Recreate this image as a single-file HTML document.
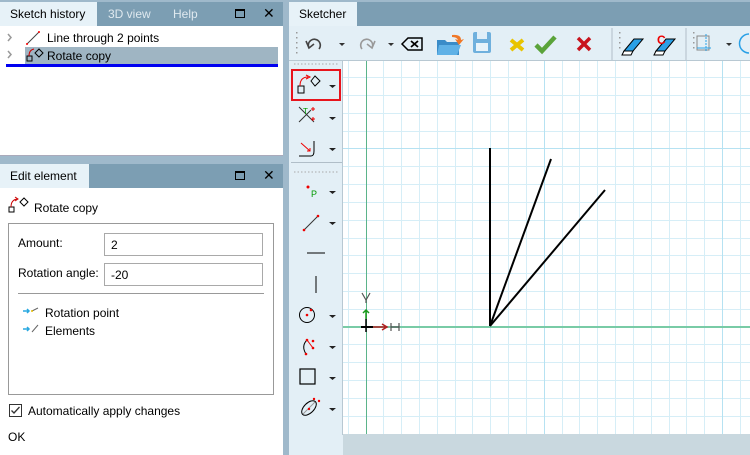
<!DOCTYPE html>
<html><head><meta charset="utf-8"><style>
*{margin:0;padding:0;box-sizing:border-box}
body{width:750px;height:455px;overflow:hidden;background:#9fb9cb;font-family:"Liberation Sans",sans-serif;font-size:12px;color:#000;position:relative}
.abs{position:absolute;white-space:nowrap}
.tabbar{background:#7c9eb3}
.tab{position:absolute;top:0;height:24px;line-height:24px;padding:0 10px;color:#dfe9ef;white-space:nowrap}
.tab.on{background:#e7f2f8;color:#000}
.ctl{position:absolute;top:4px;font-size:14px;color:#000}
.white{background:#fff}
.field{position:absolute;left:104px;width:159px;height:23px;border:1px solid #a9a9a9;background:#fff;padding:4px 6px;font-size:12px}
</style></head><body>

<!-- left top panel -->
<div class="abs tabbar" style="left:0;top:2px;width:283px;height:24px">
 <div class="tab on" style="left:0;width:97px">Sketch history</div>
 <div class="tab" style="left:98px">3D view</div>
 <div class="tab" style="left:163px">Help</div>
 <div class="abs" style="left:235px;top:7px;width:10px;height:9px;border:1.5px solid #000;border-top-width:2.5px"></div>
 <div class="ctl" style="left:263px;top:3px">✕</div>
</div>
<div class="abs white" style="left:0;top:26px;width:283px;height:130px;border-bottom:1px solid #aab"></div>
<svg class="abs" style="left:6px;top:33px" width="8" height="30"><path d="M2 1L5 4.5L2 8M2 18L5 21.5L2 25" stroke="#999" stroke-width="1.5" fill="none"/></svg>
<svg class="abs" style="left:24px;top:30px" width="18" height="16"><line x1="3" y1="14" x2="15" y2="2" stroke="#444"/><circle cx="3" cy="14" r="1" fill="red"/><circle cx="15" cy="2" r="1" fill="red"/></svg>
<div class="abs" style="left:47px;top:31px">Line through 2 points</div>
<div class="abs" style="left:25px;top:47px;width:253px;height:17px;background:#9fb5c3"></div>
<svg class="abs" style="left:25px;top:47px" width="20" height="17"><rect x="2" y="9" width="5" height="5" fill="none" stroke="#000"/><path d="M4 9 Q4 3 9 2" fill="none" stroke="#c00"/><path d="M10 6 L14 2 L18 6 L14 10Z" fill="none" stroke="#000"/></svg>
<div class="abs" style="left:47px;top:49px">Rotate copy</div>
<div class="abs" style="left:6px;top:64px;width:272px;height:3px;background:#0000f0"></div>

<!-- edit element panel -->
<div class="abs tabbar" style="left:0;top:164px;width:283px;height:24px">
 <div class="tab on" style="left:0;width:89px">Edit element</div>
 <div class="abs" style="left:235px;top:7px;width:10px;height:9px;border:1.5px solid #000;border-top-width:2.5px"></div>
 <div class="ctl" style="left:263px;top:3px">✕</div>
</div>
<div class="abs white" style="left:0;top:188px;width:283px;height:267px"></div>
<svg class="abs" style="left:8px;top:196px" width="22" height="20"><rect x="1" y="11" width="5" height="5" fill="none" stroke="#000"/><path d="M3 11 Q3 4 9 3" fill="none" stroke="#c00"/><path d="M7 1 L10 3 L7 5" fill="none" stroke="#c00"/><path d="M12 6 L16 2 L20 6 L16 10Z" fill="none" stroke="#000"/></svg>
<div class="abs" style="left:34px;top:201px">Rotate copy</div>
<div class="abs" style="left:8px;top:223px;width:266px;height:172px;border:1px solid #999"></div>
<div class="abs" style="left:18px;top:236px">Amount:</div>
<div class="field" style="top:233px">2</div>
<div class="abs" style="left:18px;top:266px">Rotation angle:</div>
<div class="field" style="top:263px">-20</div>
<div class="abs" style="left:18px;top:293px;width:246px;height:1px;background:#999"></div>
<svg class="abs" style="left:22px;top:306px" width="18" height="28"><path d="M1 5H7M5 3L7 5L5 7" stroke="#29a8e0" stroke-width="1.5" fill="none"/><line x1="10" y1="5" x2="16" y2="2" stroke="#666"/><circle cx="10" cy="5" r="1" fill="#e8c000"/><path d="M1 23H7M5 21L7 23L5 25" stroke="#29a8e0" stroke-width="1.5" fill="none"/><line x1="10" y1="26" x2="16" y2="19" stroke="#666"/></svg>
<div class="abs" style="left:45px;top:306px">Rotation point</div>
<div class="abs" style="left:45px;top:324px">Elements</div>
<div class="abs" style="left:9px;top:404px;width:13px;height:13px;border:1px solid #333;background:#fff"></div>
<svg class="abs" style="left:9px;top:404px" width="13" height="13"><path d="M2.5 6.5L5 9L10.5 3" stroke="#333" stroke-width="1.3" fill="none"/></svg>
<div class="abs" style="left:28px;top:404px">Automatically apply changes</div>
<div class="abs" style="left:8px;top:430px">OK</div>

<!-- right side -->
<div class="abs tabbar" style="left:289px;top:2px;width:461px;height:24px">
 <div class="tab on" style="left:0;width:68px">Sketcher</div>
</div>
<div class="abs" style="left:289px;top:26px;width:461px;height:429px;background:#e3eff6"></div>
<div class="abs" style="left:289px;top:60px;width:461px;height:1px;background:#b8c8d2"></div>
<!-- toolbar -->
<svg class="abs" style="left:289px;top:26px" width="461" height="34">
 <g fill="#999"><rect x="7" y="6" width="1.5" height="1.5"/><rect x="7" y="11" width="1.5" height="1.5"/><rect x="7" y="16" width="1.5" height="1.5"/><rect x="7" y="21" width="1.5" height="1.5"/><rect x="7" y="26" width="1.5" height="1.5"/>
 <rect x="330" y="6" width="1.5" height="1.5"/><rect x="330" y="11" width="1.5" height="1.5"/><rect x="330" y="16" width="1.5" height="1.5"/><rect x="330" y="21" width="1.5" height="1.5"/>
 <rect x="404" y="6" width="1.5" height="1.5"/><rect x="404" y="11" width="1.5" height="1.5"/><rect x="404" y="16" width="1.5" height="1.5"/><rect x="404" y="21" width="1.5" height="1.5"/></g>
 <line x1="323" y1="2" x2="323" y2="34" stroke="#b0bec8"/><line x1="397" y1="2" x2="397" y2="34" stroke="#b0bec8"/>
 <path d="M20 22 A6 6 0 1 1 30 23" fill="none" stroke="#444" stroke-width="1.6"/><path d="M17 15L20 22L25 18" fill="none" stroke="#444" stroke-width="1.6"/>
 <path d="M50 17l6 0l-3 3z" fill="#333"/>
 <path d="M83 22 A6 6 0 1 0 73 23" fill="none" stroke="#999" stroke-width="1.6"/><path d="M86 15L83 22L78 18" fill="none" stroke="#999" stroke-width="1.6"/>
 <path d="M99 17l6 0l-3 3z" fill="#333"/>
 <path d="M113 18L119 12H133V24H119Z" fill="none" stroke="#000" stroke-width="1.5"/><path d="M122 15L129 21M129 15L122 21" stroke="#000" stroke-width="1.8"/>
 <path d="M148 14H156L158 16H170V29H148Z" fill="#3a8cc8"/><path d="M150 19H172L168 29H148Z" fill="#5fb1e6"/><path d="M163 9Q172 8 172 14L175 13L170 19L166 13L169 14Q168 11 163 11Z" fill="#f07828"/>
 <rect x="184" y="6" width="18" height="21" rx="2" fill="#6fb0dd"/><rect x="188" y="6" width="10" height="7" fill="#dfeef8"/><rect x="187" y="17" width="12" height="8" fill="#e8f3fa"/>
 <path d="M222 14L234 24M234 14L222 24" stroke="#e8c400" stroke-width="4"/>
 <path d="M247 19L253 25L266 11" stroke="#5aa33a" stroke-width="4.5" fill="none"/>
 <path d="M289 12L301 24M301 12L289 24" stroke="#c8141e" stroke-width="3.5"/>
 <path d="M335 25L345 13H354L344 25Z" fill="#2aa0e6" stroke="#000"/><path d="M333 29L335 25H344L342 29Z" fill="#fff" stroke="#000"/>
 <path d="M367 25L377 13H386L376 25Z" fill="#2aa0e6" stroke="#000"/><path d="M365 29L367 25H376L374 29Z" fill="#fff" stroke="#000"/><text x="368" y="18" font-family="Liberation Sans" font-weight="bold" font-size="12" fill="#e00">C</text>
 <rect x="408" y="10" width="12" height="14" fill="none" stroke="#888"/><line x1="417" y1="8" x2="417" y2="26" stroke="#2aa0e6" stroke-dasharray="2 1"/><line x1="408" y1="22" x2="422" y2="22" stroke="#2aa0e6"/>
 <path d="M437 17l6 0l-3 3z" fill="#333"/>
 <path d="M460 8A8 8 0 0 0 460 27" fill="none" stroke="#2aa0e6" stroke-width="1.5"/>
</svg>
<!-- left vertical toolbar -->
<div class="abs" style="left:342px;top:61px;width:1px;height:374px;background:#b8c8d2"></div>
<div class="abs" style="left:291px;top:69px;width:50px;height:32px;border:2px solid #e8141c"></div>
<div class="abs" style="left:291px;top:162px;width:51px;height:1px;background:#b0bec8"></div>
<svg class="abs" style="left:289px;top:61px" width="53" height="374">
 <g stroke="#aaa" stroke-dasharray="1.5 2"><line x1="5" y1="3" x2="50" y2="3"/><line x1="5" y1="111" x2="50" y2="111"/></g>
 <g fill="#222"><path d="M40 24h7l-3.5 3z"/><path d="M40 56h7l-3.5 3z"/><path d="M40 87h7l-3.5 3z"/><path d="M40 130h7l-3.5 3z"/><path d="M40 161h7l-3.5 3z"/><path d="M40 254h7l-3.5 3z"/><path d="M40 285h7l-3.5 3z"/><path d="M40 316h7l-3.5 3z"/><path d="M40 347h7l-3.5 3z"/></g>
 <rect x="9" y="25" width="6" height="7" fill="none" stroke="#000"/><path d="M11 25Q11 16 19 16" fill="none" stroke="#e00"/><path d="M17 14L21 16L17 18" fill="none" stroke="#e00"/><path d="M22 20L26 15L31 20L26 25Z" fill="none" stroke="#000"/>
 <path d="M10 46L25 61M10 61L22 49" stroke="#333"/><text x="14" y="53" font-size="8" fill="#090" font-family="Liberation Sans">T</text><path d="M22 48h4M24 46v4M22 58h4M24 56v4" stroke="#e00"/>
 <path d="M10 95H22Q25 95 25 90V80" fill="none" stroke="#000"/><path d="M12 82L21 90" stroke="#e00"/><path d="M18 90h3v-3" stroke="#e00" fill="none"/>
 <circle cx="19" cy="126" r="1.5" fill="#e00"/><text x="22" y="136" font-size="9" fill="#090" font-family="Liberation Sans">P</text>
 <line x1="15" y1="169" x2="29" y2="155" stroke="#333"/><circle cx="15" cy="169" r="1.3" fill="#e00"/><circle cx="29" cy="155" r="1.3" fill="#e00"/>
 <line x1="18" y1="192" x2="36" y2="192" stroke="#000"/>
 <line x1="27" y1="215" x2="27" y2="232" stroke="#000"/>
 <circle cx="18" cy="254" r="7.5" fill="none" stroke="#000"/><circle cx="18" cy="254" r="1.3" fill="#e00"/><circle cx="22" cy="249" r="1.3" fill="#e00"/>
 <path d="M17 293Q12 285 18 279" fill="none" stroke="#000"/><path d="M18 279L24 287" stroke="#e00"/><circle cx="18" cy="279" r="1.3" fill="#e00"/><circle cx="24" cy="287" r="1.3" fill="#e00"/><circle cx="17" cy="293" r="1.3" fill="#e00"/><circle cx="24" cy="280" r="1.3" fill="#e00"/>
 <rect x="11" y="308" width="15" height="15" fill="none" stroke="#000" stroke-width="1.2"/>
 <ellipse cx="20" cy="347" rx="9" ry="5" transform="rotate(-45 20 347)" fill="none" stroke="#000"/><line x1="14" y1="353" x2="26" y2="341" stroke="#999"/><circle cx="25" cy="338" r="1.2" fill="#e00"/><circle cx="20" cy="348" r="1.2" fill="#e00"/><circle cx="30" cy="340" r="1.2" fill="#e00"/>
</svg>
<!-- canvas -->
<svg class="abs" style="left:343px;top:61px" width="407" height="373">
 <rect width="407" height="373" fill="#fff"/>
 <g stroke="#d6eef7" stroke-width="1">
  <line x1="5.5" y1="0" x2="5.5" y2="373"/><line x1="40.5" y1="0" x2="40.5" y2="373"/><line x1="58.5" y1="0" x2="58.5" y2="373"/><line x1="76.5" y1="0" x2="76.5" y2="373"/><line x1="94.5" y1="0" x2="94.5" y2="373"/><line x1="112.5" y1="0" x2="112.5" y2="373"/><line x1="129.5" y1="0" x2="129.5" y2="373"/><line x1="147.5" y1="0" x2="147.5" y2="373"/><line x1="165.5" y1="0" x2="165.5" y2="373"/><line x1="183.5" y1="0" x2="183.5" y2="373"/><line x1="219.5" y1="0" x2="219.5" y2="373"/><line x1="236.5" y1="0" x2="236.5" y2="373"/><line x1="254.5" y1="0" x2="254.5" y2="373"/><line x1="272.5" y1="0" x2="272.5" y2="373"/><line x1="290.5" y1="0" x2="290.5" y2="373"/><line x1="308.5" y1="0" x2="308.5" y2="373"/><line x1="326.5" y1="0" x2="326.5" y2="373"/><line x1="343.5" y1="0" x2="343.5" y2="373"/><line x1="361.5" y1="0" x2="361.5" y2="373"/><line x1="397.5" y1="0" x2="397.5" y2="373"/>
  <line x1="0" y1="16.5" x2="407" y2="16.5"/><line x1="0" y1="34.5" x2="407" y2="34.5"/><line x1="0" y1="52.5" x2="407" y2="52.5"/><line x1="0" y1="70.5" x2="407" y2="70.5"/><line x1="0" y1="105.5" x2="407" y2="105.5"/><line x1="0" y1="123.5" x2="407" y2="123.5"/><line x1="0" y1="141.5" x2="407" y2="141.5"/><line x1="0" y1="159.5" x2="407" y2="159.5"/><line x1="0" y1="177.5" x2="407" y2="177.5"/><line x1="0" y1="194.5" x2="407" y2="194.5"/><line x1="0" y1="212.5" x2="407" y2="212.5"/><line x1="0" y1="230.5" x2="407" y2="230.5"/><line x1="0" y1="248.5" x2="407" y2="248.5"/><line x1="0" y1="283.5" x2="407" y2="283.5"/><line x1="0" y1="301.5" x2="407" y2="301.5"/><line x1="0" y1="319.5" x2="407" y2="319.5"/><line x1="0" y1="337.5" x2="407" y2="337.5"/><line x1="0" y1="355.5" x2="407" y2="355.5"/>
 </g>
 <g stroke="#b6e2f2"><line x1="201.5" y1="0" x2="201.5" y2="373"/><line x1="379.5" y1="0" x2="379.5" y2="373"/><line x1="0" y1="87.5" x2="407" y2="87.5"/></g>
 <line x1="23.5" y1="0" x2="23.5" y2="373" stroke="#5bb48a"/>
 <line x1="0" y1="266" x2="407" y2="266" stroke="#79cba6" stroke-width="2"/>
 <g stroke="#000" stroke-width="2"><line x1="147" y1="265" x2="147" y2="87"/><line x1="147" y1="265" x2="208" y2="98"/><line x1="147" y1="265" x2="262" y2="129"/></g>
 <path d="M18 266H30" stroke="#000" stroke-width="2"/><path d="M23 258V271" stroke="#000" stroke-width="1.5"/>
 <path d="M30 266H44M39 263L44 266L39 269" stroke="#b02020" stroke-width="1.5" fill="none"/>
 <path d="M23 258V249M20 252L23 249L26 252" stroke="#1a9a1a" stroke-width="1.5" fill="none"/>
 <path d="M19 232L23 239L27 232M23 239V242" stroke="#555" fill="none" stroke-width="1.2"/>
 <path d="M48 262V270M48 266H56M56 262V270" stroke="#555" fill="none" stroke-width="1.2"/>
</svg>
<div class="abs" style="left:343px;top:434px;width:407px;height:21px;background:#c9d8df"></div>
</body></html>
